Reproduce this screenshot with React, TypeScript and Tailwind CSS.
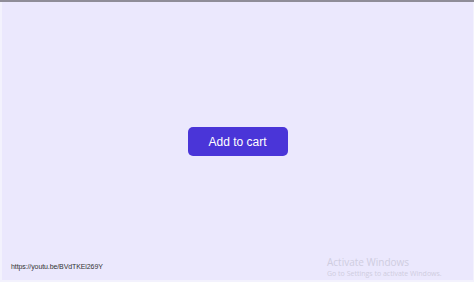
import React from "react";

export default function App() {
  return (
    <div className="w-[474px] h-[282px] flex flex-col bg-[#f3f2fd] overflow-hidden" style={{ fontFamily: "'Liberation Sans', Arial, sans-serif" }}>
      <div className="h-[2px] bg-[#8f8d98]" />
      <div className="relative flex-1 ml-[2px] mr-[1px] mb-[2px] bg-[#ebe8fd] flex items-center justify-center">
        <button className="w-[100px] h-[29px] rounded-[5px] bg-[#4a35d8] text-white text-[12px] mt-[1px]">
          Add to cart
        </button>
        <div className="absolute left-[9px] bottom-[8px] text-[7px] text-[#333] tracking-[-0.1px]">
          https://youtu.be/BVdTKEi269Y
        </div>
        <div className="absolute left-[325px] bottom-[2px] text-[#cfcde0]" style={{ fontFamily: "'Open Sans', 'Noto Sans', sans-serif" }}>
          <div className="text-[10px] leading-[12px]">Activate Windows</div>
          <div className="text-[7px] leading-[9px] mt-[1px]">Go to Settings to activate Windows.</div>
        </div>
      </div>
    </div>
  );
}
